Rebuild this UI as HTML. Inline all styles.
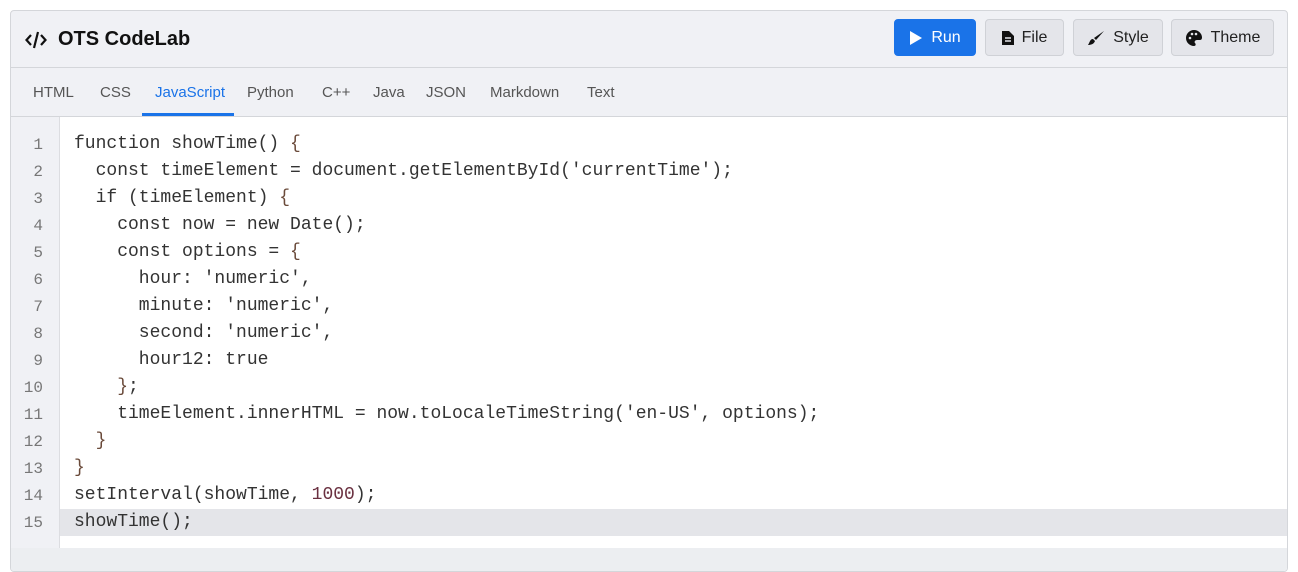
<!DOCTYPE html>
<html><head><style>
html,body{margin:0;background:#fff;font-family:"Liberation Sans",sans-serif;overflow:hidden;height:560px}
.box{position:absolute;left:10px;top:10px;width:1276px;height:560px;border:1px solid #d4d6da;border-radius:4px;background:#f0f1f5;overflow:hidden}
.hdr{height:56px;border-bottom:1px solid #d4d6da;position:relative}
.logo{position:absolute;left:14px;top:17px;font-size:20px;font-weight:bold;color:#111;display:flex;align-items:center;gap:11px}
.btn{position:absolute;top:8px;height:37px;border:1px solid #cfd1d6;border-radius:4px;background:#e4e5ea;font-size:16px;color:#222;display:flex;align-items:center;justify-content:center;gap:8px;box-sizing:border-box}
.tabs{height:48px;border-bottom:1px solid #d4d6da;position:relative}
.tab{position:absolute;top:16px;font-size:15px;color:#555}
.code{position:absolute;top:106px;left:0;right:0;bottom:0;background:#fff}
.gut{position:absolute;left:0;top:0;width:48px;bottom:0;background:#f0f1f5;border-right:1px solid #dcdde1}
.ln{position:absolute;left:0;width:32px;text-align:right;font-family:"Liberation Mono",monospace;font-size:16px;color:#777}
.line{position:absolute;left:63px;font-family:"Liberation Mono",monospace;font-size:18px;color:#333;white-space:pre;height:27px;line-height:27px}
.p{color:#6a4a3a}.n{color:#6a3040}
</style></head><body>
<div class="box">
<div class="hdr">
<div class="logo"><svg width="22" height="20" viewBox="0 0 22 20" fill="none" stroke="#111" stroke-width="2.2"><path d="M6 5L1.5 10L6 15M16 5L20.5 10L16 15M13 2L9 18"/></svg>OTS CodeLab</div>
<div class="btn" style="left:883px;width:82px;background:#1a73e8;border-color:#1a73e8;color:#fff"><svg width="14" height="16"><path d="M1 1L13 8L1 15Z" fill="#fff"/></svg>Run</div>
<div class="btn" style="left:974px;width:79px"><svg width="12" height="16"><path d="M0 1h7l5 5v9H0z" fill="#111"/><path d="M3 8h6M3 11h6" stroke="#e4e5ea" stroke-width="1.5"/></svg>File</div>
<div class="btn" style="left:1062px;width:90px"><svg width="18" height="16"><path d="M17 1L9 10l-2-2z" fill="#111"/><path d="M6 9c-3 0-3 3-5 6 3 0 6-1 7-4z" fill="#111"/></svg>Style</div>
<div class="btn" style="left:1160px;width:103px"><svg width="18" height="18" viewBox="0 0 18 18"><path d="M9 1a8 8 0 1 0 0 16c2 0 2-2 1-3s0-3 2-3h3c2 0 2-2 2-3A8 8 0 0 0 9 1z" fill="#111"/><circle cx="5" cy="9" r="1.3" fill="#e4e5ea"/><circle cx="7" cy="5" r="1.3" fill="#e4e5ea"/><circle cx="11" cy="5" r="1.3" fill="#e4e5ea"/></svg>Theme</div>
</div>
<div class="tabs">
<span class="tab" style="left:22px">HTML</span><span class="tab" style="left:89px">CSS</span>
<span class="tab" style="left:144px;color:#1a73e8">JavaScript</span>
<div style="position:absolute;left:131px;width:92px;top:45px;height:3px;background:#1a73e8"></div>
<span class="tab" style="left:236px">Python</span><span class="tab" style="left:311px">C++</span><span class="tab" style="left:362px">Java</span><span class="tab" style="left:415px">JSON</span><span class="tab" style="left:479px">Markdown</span><span class="tab" style="left:576px">Text</span>
</div>
<div class="code">
<div class="gut"></div>
<div style="position:absolute;left:49px;right:0;top:392px;height:27px;background:#e4e5e9"></div>
<div style="position:absolute;left:0;right:0;top:431px;bottom:0;background:#eceef1"></div>
<div id="c"></div>
</div>
</div>
<script>
var L=["function showTime() <span class=p>{</span>","  const timeElement = document.getElementById('currentTime');","  if (timeElement) <span class=p>{</span>","    const now = new Date();","    const options = <span class=p>{</span>","      hour: 'numeric',","      minute: 'numeric',","      second: 'numeric',","      hour12: true","    <span class=p>}</span>;","    timeElement.innerHTML = now.toLocaleTimeString('en-US', options);","  <span class=p>}</span>","<span class=p>}</span>","setInterval(showTime, <span class=n>1000</span>);","showTime();"];
var h="";for(var i=0;i<15;i++){var t=14+27*i;h+='<div class="ln" style="top:'+(t+5)+'px">'+(i+1)+'</div><div class="line" style="top:'+t+'px">'+L[i]+'</div>';}
document.getElementById('c').innerHTML=h;
</script>
</body></html>
